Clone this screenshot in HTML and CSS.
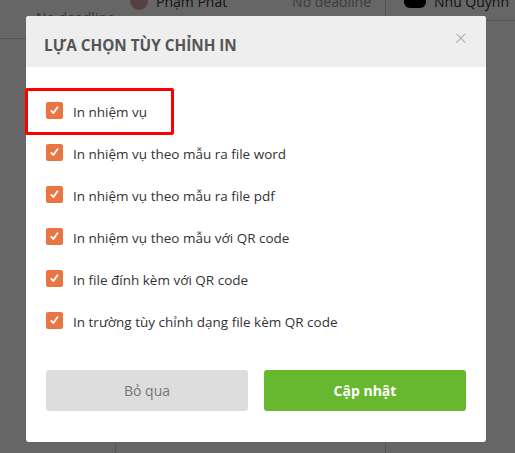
FILE: index.html
```html
<!DOCTYPE html>
<html lang="vi">
<head>
  <meta charset="UTF-8" />
  <title>Lựa chọn tùy chỉnh in</title>
  <link rel="stylesheet" href="styles.css">
</head>
<body>
  <div class="page">
    <div class="col col-a">
      <span class="cell-text faded">No deadline</span>
    </div>
    <div class="col col-b">
      <span class="avatar"></span>
      <span class="cell-text">Phạm Phát</span>
      <span class="cell-text deadline">No deadline</span>
    </div>
    <div class="col col-c">
      <span class="user-icon"></span>
      <span class="cell-text">Nhu Quynh</span>
    </div>
  </div>

  <div class="overlay"></div>

  <div class="modal">
    <div class="modal-header">
      <h2 class="modal-title">LỰA CHỌN TÙY CHỈNH IN</h2>
      <span class="close">&times;</span>
    </div>
    <div class="modal-body">
      <label class="option"><span class="check"><svg viewBox="0 0 16 16"><path d="M5 8.4 L7 10.3 L10.8 5" /></svg></span>In nhiệm vụ</label>
      <label class="option"><span class="check"><svg viewBox="0 0 16 16"><path d="M5 8.4 L7 10.3 L10.8 5" /></svg></span>In nhiệm vụ theo mẫu ra file word</label>
      <label class="option"><span class="check"><svg viewBox="0 0 16 16"><path d="M5 8.4 L7 10.3 L10.8 5" /></svg></span>In nhiệm vụ theo mẫu ra file pdf</label>
      <label class="option"><span class="check"><svg viewBox="0 0 16 16"><path d="M5 8.4 L7 10.3 L10.8 5" /></svg></span>In nhiệm vụ theo mẫu với QR code</label>
      <label class="option"><span class="check"><svg viewBox="0 0 16 16"><path d="M5 8.4 L7 10.3 L10.8 5" /></svg></span>In file đính kèm với QR code</label>
      <label class="option"><span class="check"><svg viewBox="0 0 16 16"><path d="M5 8.4 L7 10.3 L10.8 5" /></svg></span>In trường tùy chỉnh dạng file kèm QR code</label>
    </div>
    <div class="modal-footer">
      <button class="btn btn-cancel">Bỏ qua</button>
      <button class="btn btn-save">Cập nhật</button>
    </div>
  </div>

  <div class="highlight"></div>
</body>
</html>
```

FILE: styles.css
```css
* {
  margin: 0;
  padding: 0;
  box-sizing: border-box;
}

body {
  font-family: 'Open Sans', 'Noto Sans', sans-serif;
  background: #fff;
  width: 515px;
  height: 453px;
  overflow: hidden;
  position: relative;
}

/* page behind the dialog */
.page {
  display: flex;
  height: 453px;
}

.col {
  display: flex;
  align-items: flex-start;
  gap: 8px;
  border-right: 1px solid #d6d6d6;
  font-size: 14px;
  color: #333;
}

.col-a {
  width: 116px;
  padding: 6px 0 0 36px;
  border-top: 1px solid #d6d6d6;
  margin-top: 38px;
  position: relative;
}

.col-a .cell-text {
  position: relative;
  top: -29px;
  color: #888;
}

.col-b {
  width: 270px;
  padding: 0 0 0 14px;
}

.col-c {
  flex: 1;
  border-right: none;
  padding: 0 0 0 18px;
  border-bottom: 1px solid #d6d6d6;
  height: 21px;
}

.cell-text {
  line-height: 1;
  margin-top: -5px;
}

.deadline {
  margin-left: auto;
  margin-right: 14px;
  color: #999;
}

.avatar {
  width: 18px;
  height: 18px;
  border-radius: 50%;
  background: #d9a0ab;
  margin-top: -8px;
}

.user-icon {
  width: 22px;
  height: 12px;
  background: #000;
  border-radius: 0 0 6px 6px;
  margin-top: -4px;
}

.overlay {
  position: absolute;
  inset: 0;
  background: rgba(0, 0, 0, 0.6);
}

/* dialog */
.modal {
  position: absolute;
  top: 16px;
  left: 26px;
  width: 460px;
  background: #fff;
  border-radius: 3px;
  overflow: hidden;
}

.modal-header {
  height: 51px;
  background: #eee;
  display: flex;
  align-items: center;
  justify-content: space-between;
  padding: 0 18px;
}

.modal-title {
  font-size: 15.3px;
  font-weight: 700;
  color: #555;
  margin-top: 6px;
}

.close {
  font-size: 22px;
  font-weight: 300;
  color: #aaa;
  line-height: 1;
  margin-top: -10px;
  margin-right: 1px;
}

.modal-body {
  display: flex;
  flex-direction: column;
  padding: 24px 20px 0;
}

.option {
  display: flex;
  align-items: center;
  gap: 10px;
  height: 42px;
  font-size: 13.5px;
  color: #333;
}

.check {
  width: 17px;
  height: 17px;
  border-radius: 2px;
  background: #e87542;
  display: flex;
  margin-top: -3px;
}

.check svg {
  width: 17px;
  height: 17px;
}

.check path {
  fill: none;
  stroke: #fff;
  stroke-width: 1.8;
  stroke-linecap: round;
  stroke-linejoin: round;
}

.modal-footer {
  display: flex;
  gap: 16px;
  padding: 27px 20px 31px;
}

.btn {
  flex: 1;
  height: 41px;
  border: none;
  border-radius: 3px;
  font-family: inherit;
  font-size: 14px;
}

.btn-cancel {
  background: #ddd;
  color: #777;
}

.btn-save {
  background: #67b82f;
  color: #fff;
  font-weight: 700;
}

/* red annotation box */
.highlight {
  position: absolute;
  top: 88px;
  left: 25px;
  width: 149px;
  height: 47px;
  border: 3px solid #f00;
  border-radius: 2px;
}
```
